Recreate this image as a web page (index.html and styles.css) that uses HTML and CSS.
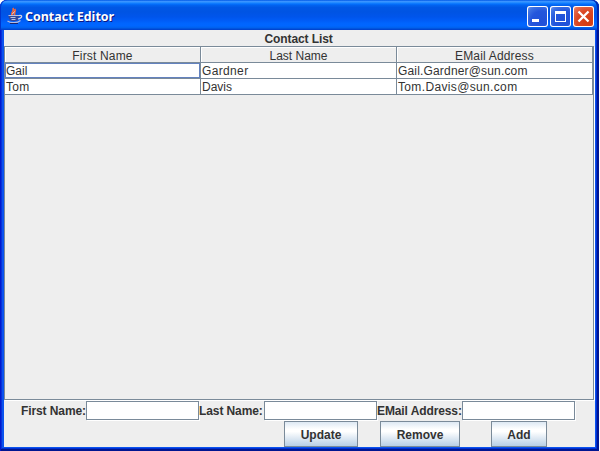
FILE: index.html
```html
<!DOCTYPE html>
<html lang="en">
<head>
<meta charset="utf-8">
<title>Contact Editor</title>
<link rel="stylesheet" href="styles.css">
</head>
<body>
<div class="window">
  <header class="titlebar">
    <svg class="logo" width="16" height="18" viewBox="0 0 16 18" fill="none">
      <path d="M5.500 8.500C3 6 8 4.500 6 1M8 8C6 6 9.500 4.500 7.800 2" stroke="#ef673e" stroke-width="1.800"/>
      <path d="M5.500 7l2-2.500" stroke="#ffd9c8"/>
      <path d="M1.500 8.500h10.500c0 3-1.500 5.500-3 5.500H5c-1.500 0-3.500-2-3.500-5.500z" fill="#33489a"/>
      <path d="M1.500 8.500h10.500M3.500 10.500h5M4.500 12.500h4" stroke="#bcc3df"/>
      <path d="M12 8.500c4-1 3.500 2.500-1 3.500" stroke="#d5d4e4" stroke-width="1.200"/>
      <path d="M.5 14c3 2.300 10 2.300 13-.5" stroke="#b5bce0" stroke-width="1.200"/>
      <path d="M3 16.500h8" stroke="#17246f"/>
    </svg>
    <h1 class="title">Contact Editor</h1>
    <div class="controls">
      <button class="control" aria-label="Minimize"><svg width="21" height="21"><path d="M5 13h7v3H5z" fill="#fff"/></svg></button>
      <button class="control" aria-label="Maximize"><svg width="21" height="21"><path d="M5 5h11v11H5zM6 8v7h9V8z" fill="#fff" fill-rule="evenodd"/></svg></button>
      <button class="control close" aria-label="Close"><svg width="21" height="21"><path d="M5.500 5.500l10 10M15.500 5.500l-10 10" stroke="#fff" stroke-width="2.300"/></svg></button>
    </div>
  </header>
  <main class="content">
    <h2 class="heading">Contact List</h2>
    <section class="pane">
      <div class="grid">
        <div class="th"><span class="wide">First Name</span></div><div class="th">Last Name</div><div class="th"><span class="wide">EMail Address</span></div>
        <div class="td focused">Gail</div><div class="td"><span class="wider">Gardner</span></div><div class="td"><span class="wide">Gail.Gardner@sun.com</span></div>
        <div class="td"><span class="wider">Tom</span></div><div class="td">Davis</div><div class="td"><span class="wider">Tom.Davis@sun.com</span></div>
      </div>
    </section>
    <form class="fields">
      <label class="short" for="first">First Name:</label><input id="first">
      <label class="short" for="last">Last Name:</label><input id="last">
      <label class="long" for="mail">EMail Address:</label><input id="mail">
    </form>
    <div class="actions">
      <button class="action update">Update</button>
      <button class="action remove">Remove</button>
      <button class="action add">Add</button>
    </div>
  </main>
</div>
</body>
</html>
```
FILE: styles.css
```css
* { box-sizing: border-box; }
body { margin: 0; background: #fff; color: #333; font: 12px/14px "Liberation Sans", sans-serif; overflow: hidden; }
.window {
  width: 599px; height: 451px; padding: 0 4px 4px;
  display: flex; flex-direction: column;
  border-radius: 7px 7px 0 0;
  background: #0a52ee;
  box-shadow: inset 1px 0 #0019cf, inset -2px 0 #001590, inset 0 -2px #001590, inset 2px 0 #0831d9, inset -3px 0 #0030d2, inset 0 -3px #0030d2;
}
.titlebar {
  height: 30px; flex: none; margin: 0 -4px; padding: 0 5px 0 7px;
  display: flex; align-items: center;
  border-radius: 7px 7px 0 0;
  background: linear-gradient(#0058e6 0, #3a93ff 5%, #288eff 8%, #127dff 11%, #036ffc 14%, #0262ee 18%, #0057e5 25%, #0054e3 40%, #0055eb 56%, #005bf5 67%, #0065fe 78%, #0066ff 86%, #0062ee 92%, #0054df 95%, #003dc8 100%);
  box-shadow: inset 1px 0 #0035ce, inset -2px 0 #0026ae;
}
.logo { margin: 2px 2px 0 0; }
.title { margin: 4px 0 0; color: #fff; font: bold 12.5px/16px "Open Sans", sans-serif; text-shadow: 1px 1px #0b1883; white-space: nowrap; letter-spacing: -.03px; }
.controls { display: flex; gap: 2px; margin: 2px 0 0 auto; }
.control {
  width: 21px; height: 21px; padding: 0; border: 0; border-radius: 3px;
  box-shadow: inset 0 0 0 1px #fff;
  background: radial-gradient(circle at 70% 75%, #2050d8 0, #2456dc 50%, #3d71e3 75%, #7d9eee 100%);
}
.control svg { display: block; }
.close { background: radial-gradient(circle at 70% 75%, #d23c12 0, #da4724 50%, #e4694c 78%, #f3a18c 100%); }
.content { flex: 1; background: #eee; display: flex; flex-direction: column; }
.heading { margin: 0; height: 16px; padding-left: 260.500px; font-size: 12px; line-height: 18px; letter-spacing: -.1px; }
.pane { height: 354px; border: 1px solid #7a8a99; box-shadow: 1px 1px #fff; margin-right: 1px; background: #eee; }
.grid { display: grid; grid-template-columns: 196px 196px 196px; grid-auto-rows: 16px; width: 588px; }
.th, .td { border: solid #7a8a99; border-width: 0 1px 1px 0; white-space: nowrap; }
.th { line-height: 18px; text-align: center; background: #eee; box-shadow: inset 1px 1px #fff; }
.td { line-height: 17px; background: #fff; padding-left: 1px; }
.focused { box-shadow: inset 0 0 0 1px #6382bf; }
.wide { letter-spacing: .17px; }
.wider { letter-spacing: .35px; }
.fields { display: flex; align-items: center; height: 19px; margin: 1px 0 0 17px; font-weight: bold; }
.fields label { line-height: 20px; height: 19px; letter-spacing: -.1px; white-space: nowrap; }
.short { width: 65px; }
.long { width: 85px; }
.fields input { width: 113px; height: 19px; border: 1px solid #7a8a99; border-radius: 0; padding: 0; background: #fff; outline: none; box-shadow: 1px 1px #fff; }
.actions { display: flex; height: 26px; margin: 1px 0 0 280px; }
.action { height: 26px; border: 1px solid #7a8a99; border-radius: 0; padding: 1px 0 0; color: #333; font: bold 12px/14px "Liberation Sans", sans-serif; background: linear-gradient(#dde8f3 0, #fff 30%, #fff 40%, #b8cfe5 100%); }
.update { width: 74px; margin-right: 22px; }
.remove { width: 80px; margin-right: 31px; }
.add { width: 56px; }
```
